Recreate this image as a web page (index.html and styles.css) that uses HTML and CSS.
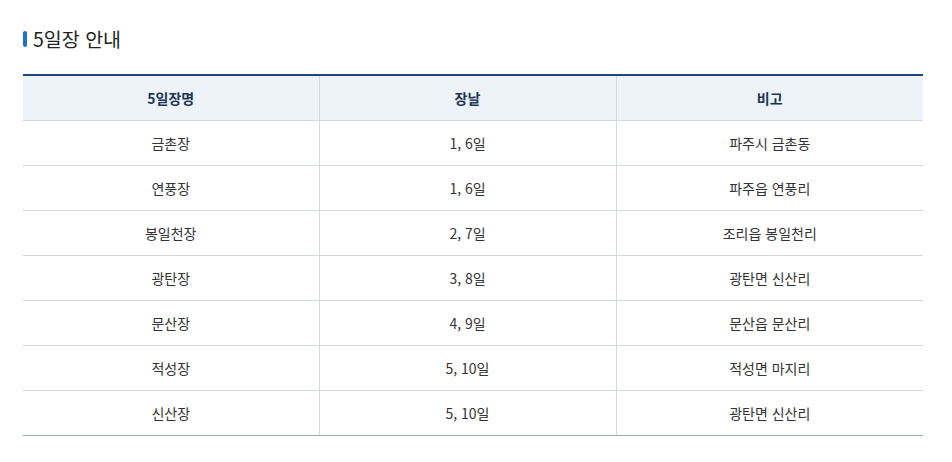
FILE: index.html
```html
<!DOCTYPE html>
<html lang="ko">
<head>
<meta charset="utf-8">
<link rel="stylesheet" href="styles.css">
</head>
<body>
<div class="wrap">
  <h2 class="title">5일장 안내</h2>
  <table class="market">
    <colgroup><col class="c1"><col class="c2"><col class="c3"></colgroup>
    <thead>
      <tr><th>5일장명</th><th>장날</th><th>비고</th></tr>
    </thead>
    <tbody>
      <tr><td>금촌장</td><td>1, 6일</td><td>파주시 금촌동</td></tr>
      <tr><td>연풍장</td><td>1, 6일</td><td>파주읍 연풍리</td></tr>
      <tr><td>봉일천장</td><td>2, 7일</td><td>조리읍 봉일천리</td></tr>
      <tr><td>광탄장</td><td>3, 8일</td><td>광탄면 신산리</td></tr>
      <tr><td>문산장</td><td>4, 9일</td><td>문산읍 문산리</td></tr>
      <tr><td>적성장</td><td>5, 10일</td><td>적성면 마지리</td></tr>
      <tr><td>신산장</td><td>5, 10일</td><td>광탄면 신산리</td></tr>
    </tbody>
  </table>
</div>
</body>
</html>
```
FILE: styles.css
```css
html, body { margin: 0; padding: 0; background: #fff; }
body { font-family: "Noto Sans CJK KR", "Noto Sans", sans-serif; color: #333; }
.wrap { padding: 26px 29px 0 23px; }
.title {
  margin: 0;
  padding-left: 10px;
  position: relative;
  font-size: 19.5px;
  font-weight: 400;
  line-height: 26px;
  color: #222;
}
.title::before {
  content: "";
  position: absolute;
  left: 0; top: 5px;
  width: 4px; height: 16px;
  border-radius: 2px;
  background: #1e6fd8;
}
.market {
  margin-top: 22px;
  width: 900px;
  border-collapse: collapse;
  table-layout: fixed;
  border-top: 2px solid #1b4a78;
  border-bottom: 1px solid #9aa8b4;
  font-size: 14px;
}
.c1 { width: 296px; }
.c2 { width: 297px; }
.c3 { width: 307px; }
.market th, .market td {
  height: 44px;
  padding: 0;
  text-align: center;
  vertical-align: middle;
  border-left: 1px solid #d4d9de;
  border-bottom: 1px solid #d4d9de;
}
.market th:first-child, .market td:first-child { border-left: none; }
.market th {
  background: #edf3f8;
  color: #1c3557;
  font-weight: 700;
}
.market tbody tr:last-child td { border-bottom: 1px solid #9aa8b4; }
.market td { color: #333; font-weight: 400; }
```
